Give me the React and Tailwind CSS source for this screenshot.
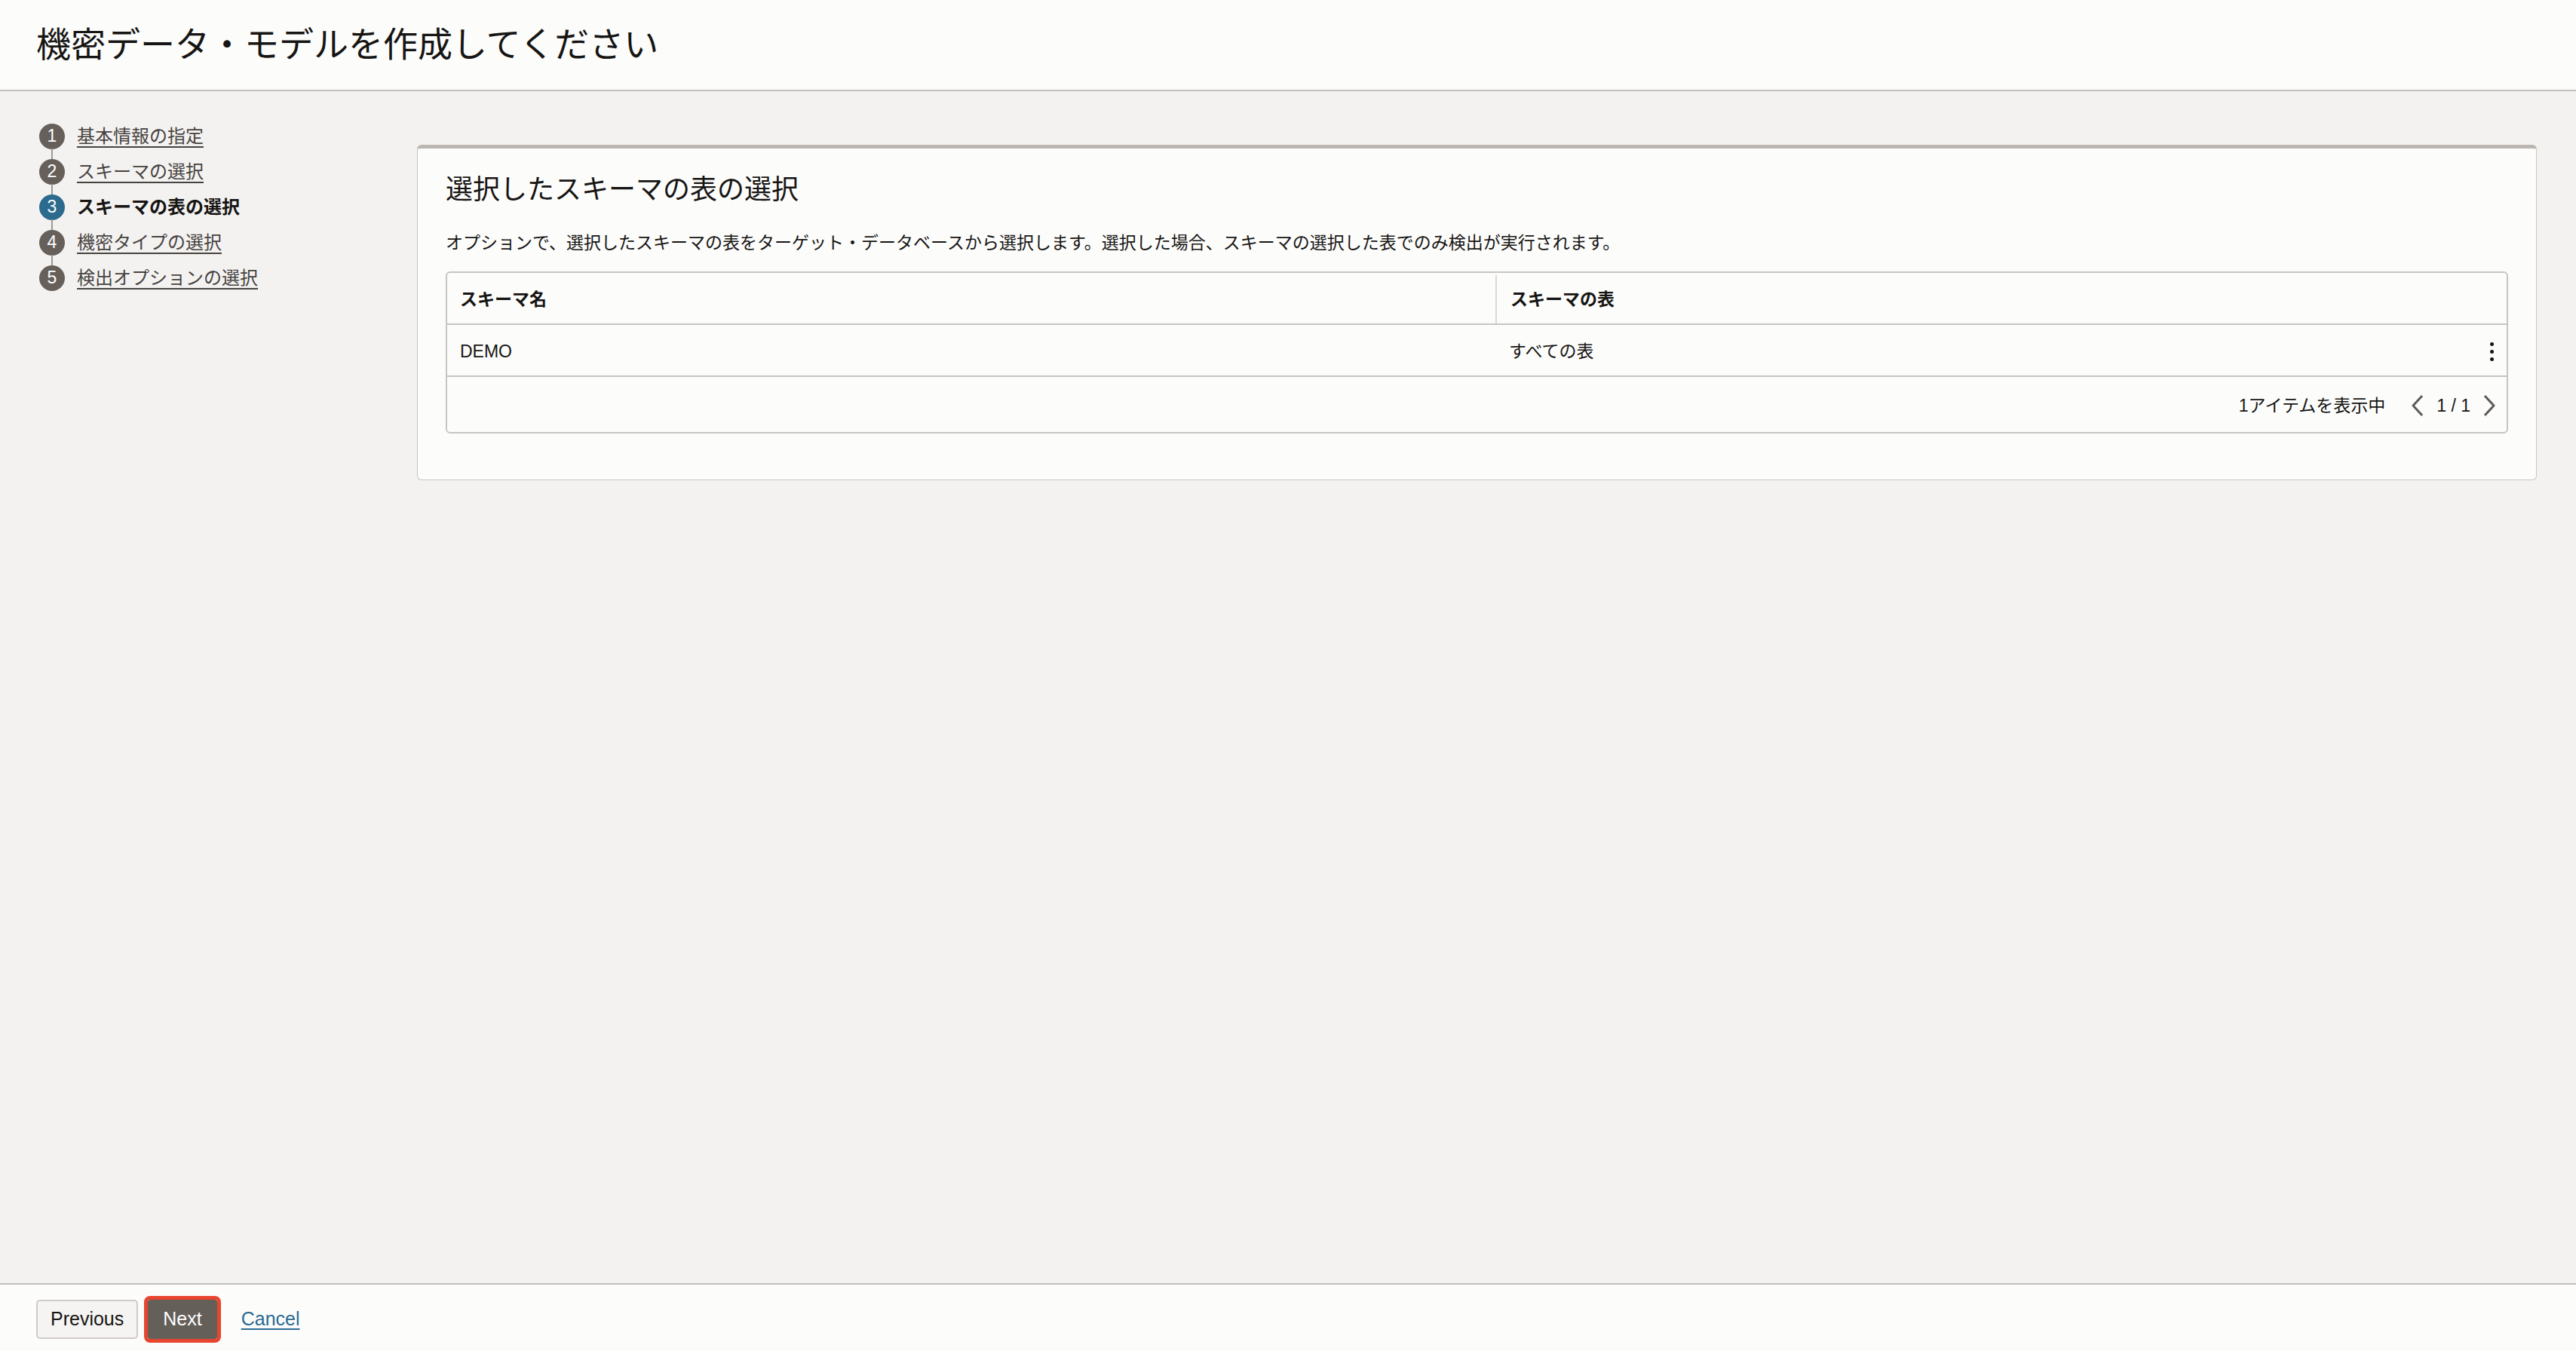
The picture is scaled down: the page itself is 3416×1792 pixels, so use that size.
import React from "react";

const steps = [
  { n: 1, label: "基本情報の指定" },
  { n: 2, label: "スキーマの選択" },
  { n: 3, label: "スキーマの表の選択", active: true },
  { n: 4, label: "機密タイプの選択" },
  { n: 5, label: "検出オプションの選択" },
];

function StepNav() {
  return (
    <nav className="flex flex-col">
      {steps.map((s, i) => (
        <div key={s.n} className="flex flex-col">
          {i > 0 && <div className="ml-[16px] h-[14px] w-[2px] bg-[#9e9892]" />}
          <div className="flex h-[33px] items-center gap-[16px]">
            <span
              className={
                s.active
                  ? "flex h-[34px] w-[34px] items-center justify-center rounded-full bg-[#2c6a8e] text-[23px] text-white"
                  : "flex h-[34px] w-[34px] items-center justify-center rounded-full bg-[#665f5a] text-[23px] text-white"
              }
            >
              {s.n}
            </span>
            {s.active ? (
              <span className="text-[24px] font-bold text-[#161513]">{s.label}</span>
            ) : (
              <a className="text-[24px] text-[#47433f] underline underline-offset-[5px] decoration-[2px]">
                {s.label}
              </a>
            )}
          </div>
        </div>
      ))}
    </nav>
  );
}

function Chevron({ dir }) {
  return (
    <svg width="18" height="30" viewBox="0 0 18 30" fill="none">
      <polyline
        points={dir === "left" ? "15,2 3,15 15,28" : "3,2 15,15 3,28"}
        stroke="#5f5a56"
        strokeWidth="3"
        strokeLinejoin="round"
      />
    </svg>
  );
}

export default function App() {
  return (
    <div
      className="flex h-[1792px] flex-col bg-[#f3f2f1] text-[#161513]"
      style={{ fontFamily: '"Liberation Sans", "Noto Sans CJK JP", sans-serif' }}
    >
      {/* Header */}
      <header className="flex h-[121px] items-center border-b-2 border-[#c4bfba] bg-[#fcfcfb] px-[48px]">
        <h1 className="text-[46px] font-normal">機密データ・モデルを作成してください</h1>
      </header>

      {/* Body */}
      <main className="flex flex-1 items-start">
        <div className="w-[553px] shrink-0 pl-[52px] pt-[43px]">
          <StepNav />
        </div>

        <section className="mr-[52px] mt-[71px] flex-1 rounded-[6px] border border-t-[5px] border-[#c9c5c1] border-t-[#bcb6b1] bg-[#fcfcfb] px-[37px] pb-[61px] pt-[31px]">
          <h2 className="text-[36px] leading-[48px] font-normal">選択したスキーマの表の選択</h2>
          <p className="mt-[30px] text-[23px] leading-[32px]">
            オプションで、選択したスキーマの表をターゲット・データベースから選択します。選択した場合、スキーマの選択した表でのみ検出が実行されます。
          </p>

          <div className="mt-[22px] rounded-[6px] border-2 border-[#c9c5c1]">
            <div className="flex h-[69px] border-b-2 border-[#c9c5c1] pt-[3px] text-[23px] font-bold">
              <div className="flex w-[1390px] items-center px-[17px]">スキーマ名</div>
              <div className="flex flex-1 items-center border-l-2 border-[#dcd8d4] px-[18px]">スキーマの表</div>
            </div>
            <div className="flex h-[69px] border-b-2 border-[#c9c5c1] pt-[3px] text-[23px]">
              <div className="flex w-[1390px] items-center px-[17px]">DEMO</div>
              <div className="flex flex-1 items-center justify-between pl-[18px] pr-[17px]">
                <span>すべての表</span>
                <span className="flex flex-col gap-[5px]">
                  <span className="h-[5px] w-[5px] rounded-full bg-[#161513]" />
                  <span className="h-[5px] w-[5px] rounded-full bg-[#161513]" />
                  <span className="h-[5px] w-[5px] rounded-full bg-[#161513]" />
                </span>
              </div>
            </div>
            <div className="flex h-[73px] items-center justify-end gap-[34px] pr-[14px] pt-[3px] text-[23px]">
              <span>1アイテムを表示中</span>
              <div className="flex items-center gap-[16px]">
                <Chevron dir="left" />
                <span>1 / 1</span>
                <Chevron dir="right" />
              </div>
            </div>
          </div>
        </section>
      </main>

      {/* Footer */}
      <footer className="flex h-[90px] items-center gap-[13px] border-t-2 border-[#c4bfba] bg-[#fcfcfb] px-[48px] pt-[4px]">
        <button className="h-[52px] rounded-[5px] border-2 border-[#cfcbc7] bg-[#f5f4f2] px-[17px] text-[25px] text-[#161513]">
          Previous
        </button>
        <button className="h-[52px] rounded-[3px] bg-[#655f5a] px-[20px] text-[25px] text-white outline outline-[5px] outline-[#e8452f]">
          Next
        </button>
        <a className="ml-[19px] text-[25px] text-[#2a6a94] underline underline-offset-[4px] decoration-[2px]">
          Cancel
        </a>
      </footer>
    </div>
  );
}
